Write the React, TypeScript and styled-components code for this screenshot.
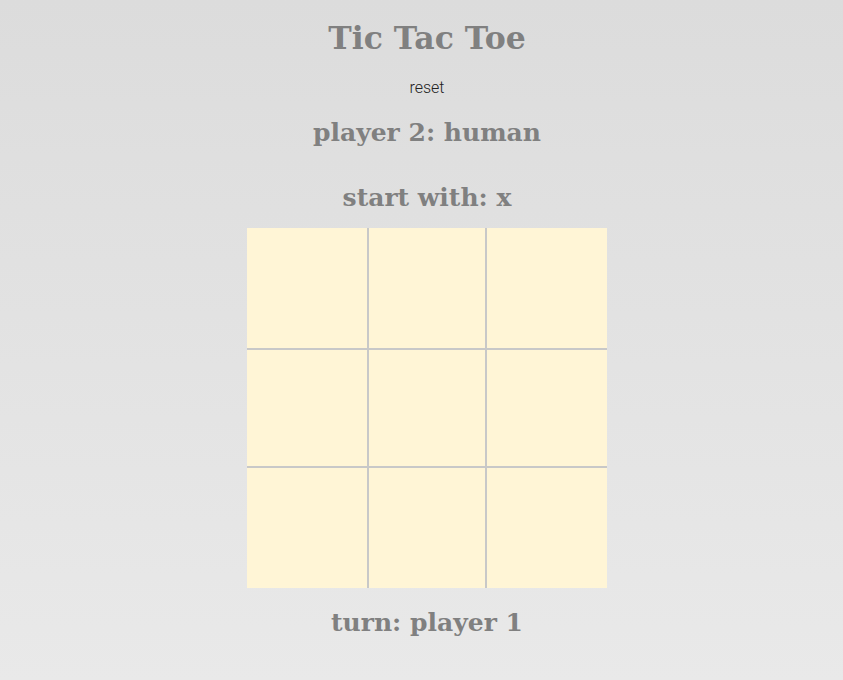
import styled, { createGlobalStyle } from "styled-components";

const Global = createGlobalStyle`
  html, body {
    margin: 0;
    padding: 0;
    height: 100%;
  }
  body {
    background: linear-gradient(to bottom, #dcdcdc, #e9e9e9);
    min-height: 680px;
  }
`;

const Page = styled.div`
  display: flex;
  flex-direction: column;
  align-items: center;
  padding-left: 11px;
  font-family: "DejaVu Serif", serif;
  color: #808080;
`;

const Title = styled.h1`
  margin: 18px 0 0;
  font-size: 31.5px;
  line-height: 40px;
  font-weight: bold;
`;

const Reset = styled.button`
  margin-top: 20px;
  border: none;
  background: none;
  padding: 0;
  font-family: Roboto, sans-serif;
  font-weight: 300;
  font-size: 16px;
  line-height: 20px;
  color: #222;
  cursor: pointer;
`;

const Label = styled.h2<{ $gap?: number }>`
  margin: ${(p) => p.$gap ?? 0}px 0 0;
  font-size: 25px;
  line-height: 32px;
  font-weight: bold;
`;

const Board = styled.div`
  margin-top: 14px;
  display: grid;
  grid-template-columns: repeat(3, 120px);
  grid-template-rows: repeat(3, 120px);
  background: #fff5d6;
`;

const Cell = styled.div<{ $col: number; $row: number }>`
  box-sizing: border-box;
  border-color: #c8c8c8;
  border-style: solid;
  border-width: ${(p) => (p.$row === 1 ? "2px" : "0")} ${(p) => (p.$col === 1 ? "2px" : "0")};
  cursor: pointer;
`;

export default function App() {
  const cells = Array.from({ length: 9 }, (_, i) => i);
  return (
    <>
      <Global />
      <Page>
        <Title>Tic Tac Toe</Title>
        <Reset>reset</Reset>
        <Label $gap={19}>player 2: human</Label>
        <Label $gap={33}>start with: x</Label>
        <Board>
          {cells.map((i) => (
            <Cell key={i} $col={i % 3} $row={Math.floor(i / 3)} />
          ))}
        </Board>
        <Label $gap={19}>turn: player 1</Label>
      </Page>
    </>
  );
}
